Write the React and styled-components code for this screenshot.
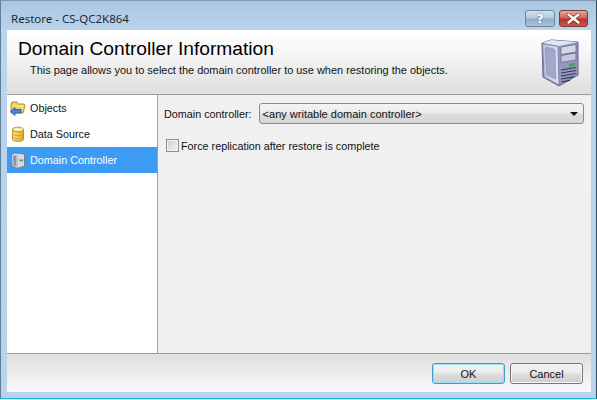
import React from "react";
import styled, { createGlobalStyle } from "styled-components";

const GlobalStyle = createGlobalStyle`
  html, body {
    margin: 0;
    padding: 0;
    background: #ffffff;
  }
  * {
    box-sizing: border-box;
  }
`;

const uiFont = `"Liberation Sans", Arial, sans-serif`;

const Window = styled.div`
  width: 597px;
  height: 399px;
  display: flex;
  flex-direction: column;
  padding: 0 5px 6px 6px;
  overflow: hidden;
  font-family: ${uiFont};
  font-size: 10.8px;
  color: #111;
  background: linear-gradient(180deg, #a9c6e2 0, #bcd4ec 30px, #b9d3ee 100%);
  border-top: 1px solid #7f98ae;
  border-left: 1px solid #5f7f96;
  border-right: 1px solid #2b4a5c;
  border-bottom: 1px solid #18b4d2;
`;

const TitleBar = styled.div`
  height: 29px;
  flex: none;
  display: flex;
  align-items: flex-start;
  justify-content: space-between;
`;

const Title = styled.span`
  margin: 10px 0 0 4px;
  font-family: "Noto Sans", sans-serif;
  font-size: 11.5px;
  line-height: 16px;
  color: #1c2a38;
`;

const Controls = styled.div`
  display: flex;
  gap: 4px;
  margin: 9px 3px 0 0;
`;

const Control = styled.div`
  width: ${(p) => (p.$close ? "29px" : "30px")};
  height: 17px;
  display: flex;
  align-items: center;
  justify-content: center;
  border: 1px solid ${(p) => (p.$close ? "#7c3a34" : "#6b859c")};
  border-radius: 3px;
  background: ${(p) =>
    p.$close
      ? "linear-gradient(180deg, #e9a79d 0, #d0685c 45%, #b93226 55%, #c9584a 100%)"
      : "linear-gradient(180deg, #d5e3ef 0, #b5cbde 45%, #93afc8 55%, #a9c3d8 100%)"};
  color: #fff;
  font-family: "DejaVu Sans", sans-serif;
  font-weight: 700;
  font-size: 13px;
  line-height: 1;
  text-shadow: 0 0 2px #40505e;
`;

const CloseMark = styled.svg`
  width: 15px;
  height: 11px;
`;

const Client = styled.div`
  flex: 1;
  min-height: 0;
  display: flex;
  flex-direction: column;
  background: #f0f0f0;
`;

const Header = styled.header`
  height: 65px;
  flex: none;
  display: flex;
  justify-content: space-between;
  background: linear-gradient(180deg, #ffffff 0, #f6f6f6 35%, #dedede 100%);
  border-bottom: 1px solid #9d9d9d;
`;

const HeaderText = styled.div`
  padding: 7px 0 0 11px;
`;

const Heading = styled.h1`
  margin: 0;
  font-size: 19.2px;
  font-weight: 400;
  line-height: 23px;
  color: #000;
`;

const Subheading = styled.p`
  margin: 3px 0 0 12px;
  font-size: 10.95px;
  line-height: 14px;
  color: #111;
`;

const ServerArt = styled.svg`
  width: 38px;
  height: 48px;
  margin: 9px 12px 0 0;
`;

const Body = styled.div`
  flex: 1;
  min-height: 0;
  display: flex;
  border-bottom: 1px solid #9d9d9d;
`;

const Sidebar = styled.nav`
  width: 151px;
  flex: none;
  background: #ffffff;
  border-right: 1px solid #9d9d9d;
`;

const NavItem = styled.div`
  height: 26px;
  display: flex;
  align-items: center;
  gap: 4px;
  padding-left: 3px;
  background: ${(p) => (p.$active ? "#3d9bf5" : "transparent")};
  color: ${(p) => (p.$active ? "#ffffff" : "#111")};
`;

const NavIcon = styled.svg`
  width: 16px;
  height: 17px;
  flex: none;
`;

const Content = styled.main`
  flex: 1;
  padding: 8px 7px 0 6px;
  display: flex;
  flex-direction: column;
  gap: 15px;
`;

const FieldRow = styled.div`
  display: flex;
  align-items: center;
  gap: 7px;
`;

const Select = styled.div`
  flex: 1;
  height: 21px;
  display: flex;
  align-items: center;
  justify-content: space-between;
  padding: 1px 5px 0 3px;
  font-size: 11px;
  border: 1px solid #8a8a8a;
  border-radius: 3px;
  background: linear-gradient(180deg, #f4f4f4 0, #ececec 48%, #dcdcdc 52%, #d6d6d6 100%);
`;

const Caret = styled.span`
  width: 0;
  height: 0;
  border-left: 4px solid transparent;
  border-right: 4px solid transparent;
  border-top: 4px solid #111;
`;

const CheckRow = styled.label`
  display: flex;
  align-items: center;
  gap: 2px;
  padding-left: 2px;
`;

const Checkbox = styled.span`
  width: 13px;
  height: 13px;
  border: 1px solid #8e8f8f;
  background: linear-gradient(135deg, #cfcfcf 0, #e6e6e6 60%, #f6f6f6 100%);
  box-shadow: inset 0 0 0 1px #f2f2f2;
`;

const Footer = styled.footer`
  height: 38px;
  flex: none;
  display: flex;
  justify-content: flex-end;
  align-items: flex-start;
  gap: 5px;
  padding: 9px 8px 0 0;
  background: linear-gradient(180deg, #dfdfdf 0, #eeeeee 60%, #fbfbfb 100%);
`;

const Button = styled.button`
  width: 73px;
  height: 21px;
  padding: 0;
  font-family: ${uiFont};
  font-size: 11px;
  color: #111;
  border: 1px solid ${(p) => (p.$primary ? "#3c9fd0" : "#777")};
  border-radius: 3px;
  background: linear-gradient(180deg, #f3f3f3 0, #ebebeb 48%, #dcdcdc 52%, #cfcfcf 100%);
  box-shadow: ${(p) => (p.$primary ? "inset 0 0 0 1px #9ddcf5" : "inset 0 0 0 1px #f7f7f7")};
`;

const FolderIcon = () => (
  <NavIcon viewBox="0 0 16 17">
    <path d="M1 5 L1 13 L13 13 L15 6 L14 4 L8 4 L7 2 L2 2 Z" fill="#f6cf5e" stroke="#a98320" strokeWidth="0.9" />
    <path d="M3 6 L14 6" stroke="#fdeeb0" strokeWidth="1" />
    <path d="M0.5 11.5 L5 7.5 L5 9.5 L11 9.5 L11 13 L5 13 L5 15.5 Z" fill="#3f86e4" stroke="#1d4c9c" strokeWidth="0.7" />
  </NavIcon>
);

const DatabaseIcon = () => (
  <NavIcon viewBox="0 0 16 17">
    <defs>
      <linearGradient id="dbFill" x1="0" x2="1" y1="0" y2="0">
        <stop offset="0" stopColor="#f9e27a" />
        <stop offset="1" stopColor="#e4ac22" />
      </linearGradient>
    </defs>
    <path d="M2.5 3.5 V13.5 C2.5 16 13.5 16 13.5 13.5 V3.5 Z" fill="url(#dbFill)" stroke="#a5801a" strokeWidth="0.8" />
    <ellipse cx="8" cy="3.5" rx="5.5" ry="2.3" fill="#fdf0a8" stroke="#a5801a" strokeWidth="0.8" />
    <path d="M2.5 8 C2.5 10.2 13.5 10.2 13.5 8 M2.5 11 C2.5 13.2 13.5 13.2 13.5 11" fill="none" stroke="#c99c20" strokeWidth="0.7" />
  </NavIcon>
);

const TowerIcon = () => (
  <NavIcon viewBox="0 0 16 17">
    <path d="M1.5 2.5 L5 1 L14.5 2 L14.5 14 L7 16.5 L2 14 Z" fill="#d8dae2" stroke="#6e7284" strokeWidth="0.8" />
    <path d="M3 3.5 L6 3.5 L6 14.5 L3.5 13.2 Z" fill="#8f92a8" />
    <path d="M7 3 V16" stroke="#8a8ea0" strokeWidth="0.7" />
    <rect x="9.5" y="7.5" width="3.5" height="1.8" fill="#4aa35a" />
  </NavIcon>
);

const ServerIllustration = () => (
  <ServerArt viewBox="0 0 38 48">
    <defs>
      <linearGradient id="sideFill" x1="0" x2="1" y1="0" y2="0">
        <stop offset="0" stopColor="#b9bddb" />
        <stop offset="1" stopColor="#dfe1f0" />
      </linearGradient>
    </defs>
    <path d="M1 4 L10 1 L37 3 L37 36 L18 47 L2 38 Z" fill="#9498bd" stroke="#5f638f" strokeWidth="1" />
    <path d="M1 4 L10 1 L37 3 L18 7 Z" fill="#e3e5f0" />
    <path d="M1.5 4.5 L17 7.5 L18 46 L3 38 Z" fill="url(#sideFill)" stroke="#7478a0" strokeWidth="0.8" />
    <path d="M4.5 10 Q4.5 8 6.5 8.5 L12 9.8 Q14 10.3 14 12.5 L14.5 40 L6 35.5 Z" fill="#a3a7cc" stroke="#8388ae" strokeWidth="0.6" />
    <path d="M20 8 L35 5.5 L35 13 L20 15.5 Z" fill="#d5d7e8" stroke="#666a94" strokeWidth="0.8" />
    <path d="M20 16.5 L35 14 L35 21 L20 23.5 Z" fill="#c5c8df" stroke="#666a94" strokeWidth="0.8" />
    <path d="M28 25 L34.5 23.8 L34.5 26.8 L28 28 Z" fill="#3fb04f" />
    <path d="M20 31 L35 28.5 M20 34 L35 31.5 M20 37 L35 34.5 M20 40 L33 37.8 M20 43 L29 41.3" stroke="#34364f" strokeWidth="1.2" />
  </ServerArt>
);

const CloseIcon = () => (
  <CloseMark viewBox="0 0 15 11">
    <path d="M2.5 1.5 L12.5 9.5 M12.5 1.5 L2.5 9.5" stroke="#6e2a24" strokeWidth="3.6" strokeLinecap="round" />
    <path d="M2.5 1.5 L12.5 9.5 M12.5 1.5 L2.5 9.5" stroke="#ffffff" strokeWidth="2.4" strokeLinecap="round" />
  </CloseMark>
);

const navItems = [
  { label: "Objects", Icon: FolderIcon },
  { label: "Data Source", Icon: DatabaseIcon },
  { label: "Domain Controller", Icon: TowerIcon, active: true },
];

export default function App() {
  return (
    <>
      <GlobalStyle />
      <Window>
        <TitleBar>
          <Title>Restore - CS-QC2K864</Title>
          <Controls>
            <Control>?</Control>
            <Control $close>
              <CloseIcon />
            </Control>
          </Controls>
        </TitleBar>
        <Client>
          <Header>
            <HeaderText>
              <Heading>Domain Controller Information</Heading>
              <Subheading>
                This page allows you to select the domain controller to use when restoring the objects.
              </Subheading>
            </HeaderText>
            <ServerIllustration />
          </Header>
          <Body>
            <Sidebar>
              {navItems.map(({ label, Icon, active }) => (
                <NavItem key={label} $active={active}>
                  <Icon />
                  {label}
                </NavItem>
              ))}
            </Sidebar>
            <Content>
              <FieldRow>
                Domain controller:
                <Select>
                  &lt;any writable domain controller&gt;
                  <Caret />
                </Select>
              </FieldRow>
              <CheckRow>
                <Checkbox />
                Force replication after restore is complete
              </CheckRow>
            </Content>
          </Body>
          <Footer>
            <Button $primary>OK</Button>
            <Button>Cancel</Button>
          </Footer>
        </Client>
      </Window>
    </>
  );
}
